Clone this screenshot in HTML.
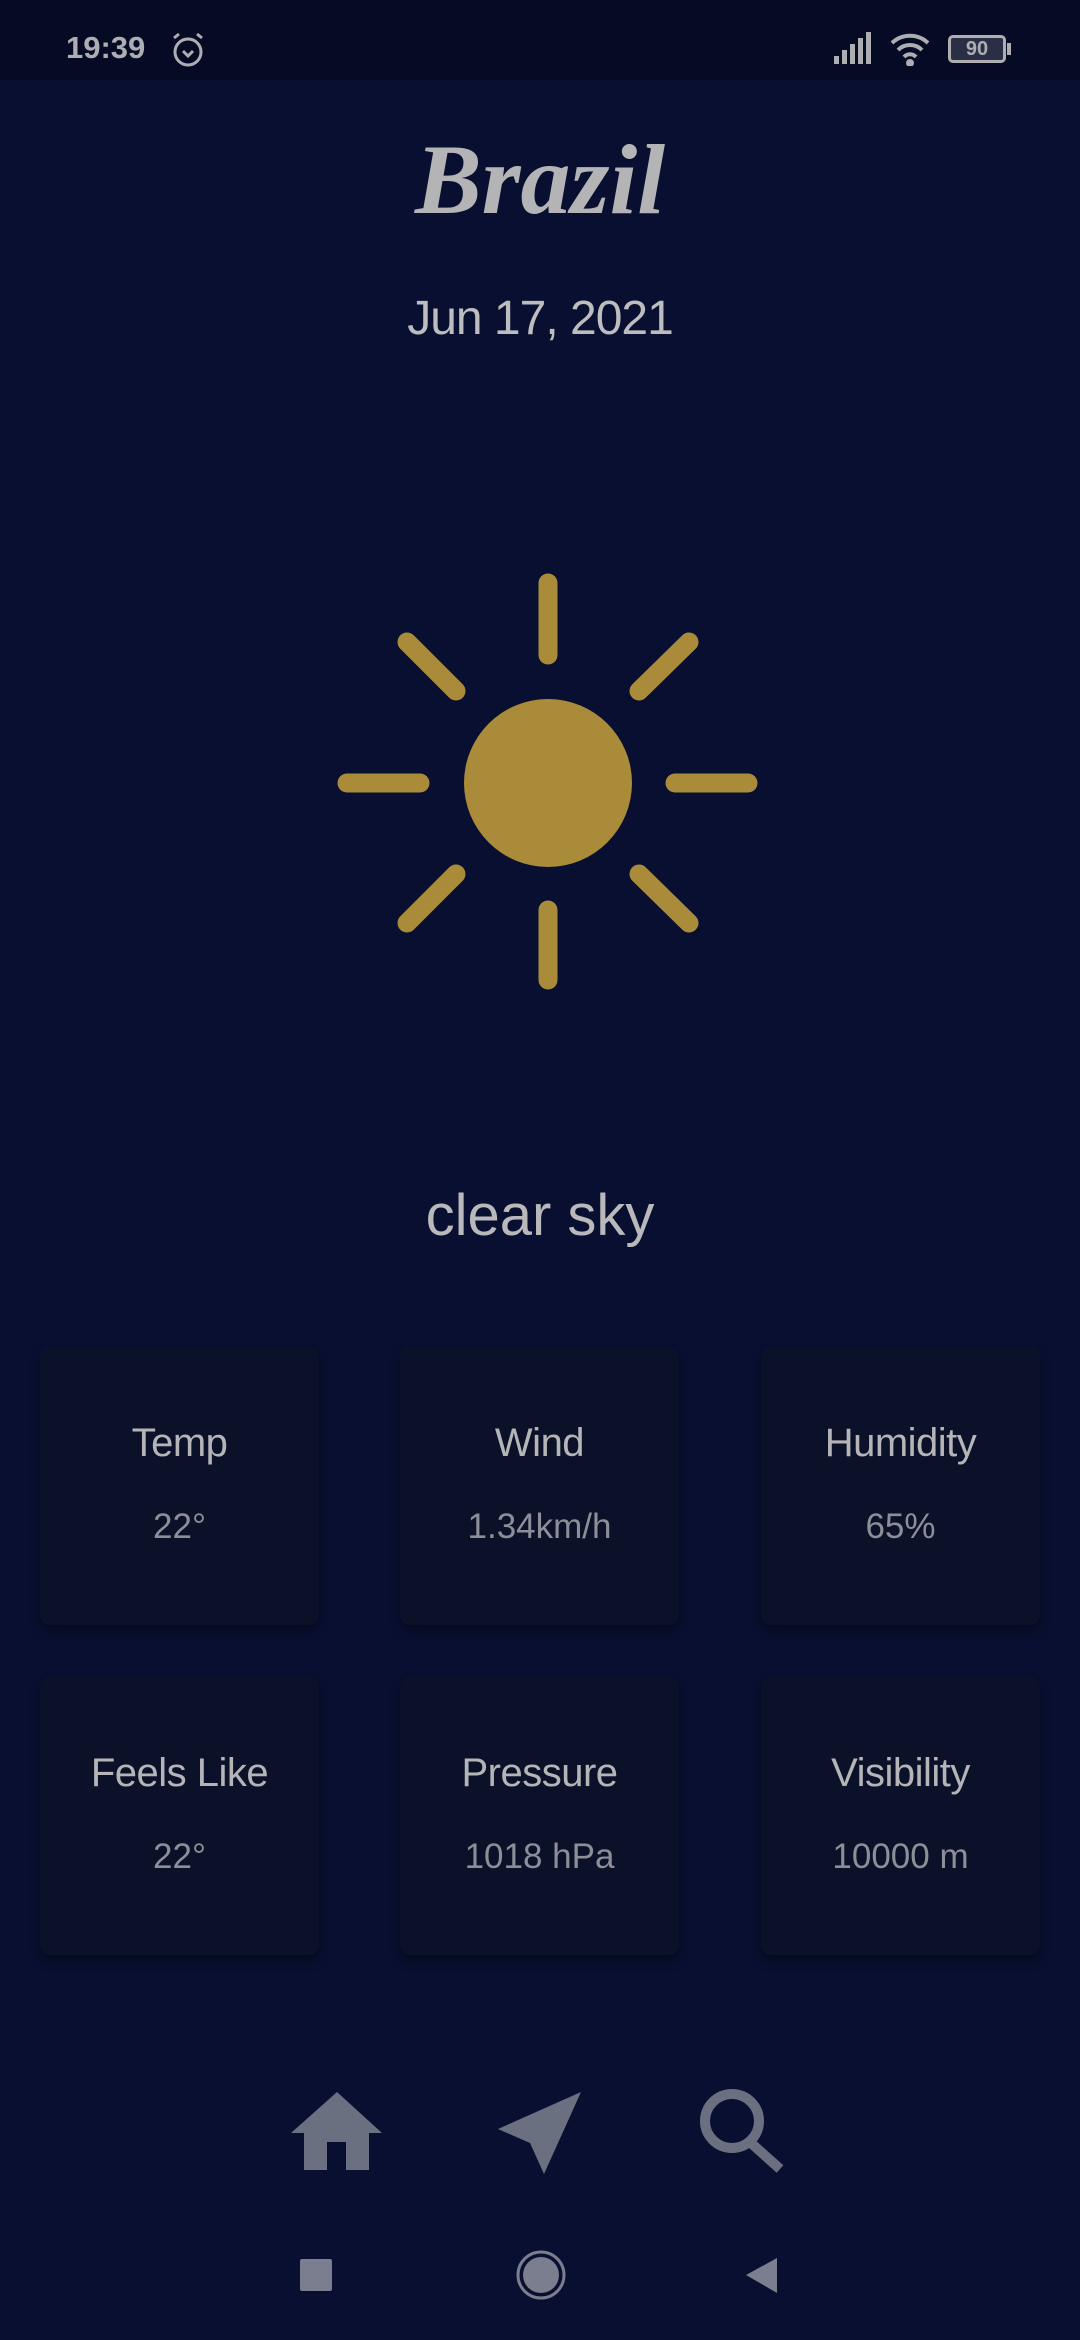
<!DOCTYPE html>
<html><head><meta charset="utf-8"><style>
*{margin:0;padding:0;box-sizing:border-box}
body{width:1080px;height:2340px;background:#080f30;position:relative;overflow:hidden;font-family:"Liberation Sans",sans-serif;color:#b8b8bc}
.sb{position:absolute;left:0;top:0;width:1080px;height:80px;background:#050b25}
.t{position:absolute;text-align:center;width:1080px;left:0}
.card{position:absolute;width:279px;height:278px;background:#0b1129;border-radius:10px;box-shadow:0 6px 10px rgba(0,0,0,.35)}
.card .l{position:absolute;top:74px;width:100%;text-align:center;font-size:40px;color:#b5b5b8;letter-spacing:-0.5px}
.card .v{position:absolute;top:160px;width:100%;text-align:center;font-size:35px;color:#8c8e98;font-weight:300}
</style></head><body>
<div class="sb"></div>
<div style="position:absolute;left:66px;top:30px;font-size:31px;font-weight:bold;color:#aeaeb2">19:39</div>
<svg style="position:absolute;left:168px;top:30px" width="40" height="40" viewBox="0 0 40 40" fill="none" stroke="#aeaeb2" stroke-width="3"><circle cx="20" cy="22" r="13"/><path d="M15 21l5 5 5-5M6 8l5-4M34 8l-5-4"/></svg>
<svg style="position:absolute;left:834px;top:32px" width="40" height="32" viewBox="0 0 40 32" fill="#aeaeb2"><rect x="0" y="24" width="5" height="8"/><rect x="8" y="18" width="5" height="14"/><rect x="16" y="12" width="5" height="20"/><rect x="24" y="6" width="5" height="26"/><rect x="32" y="0" width="5" height="32"/></svg>
<svg style="position:absolute;left:888px;top:32px" width="44" height="34" viewBox="0 0 44 34" fill="none" stroke="#aeaeb2" stroke-width="4"><path d="M4 11a26 26 0 0 1 36 0M10 18a17 17 0 0 1 24 0M16 25a8 8 0 0 1 12 0"/><circle cx="22" cy="31" r="2" fill="#aeaeb2"/></svg>
<div style="position:absolute;left:948px;top:35px;width:58px;height:28px;border:3px solid #aeaeb2;border-radius:5px;background:#2a2f45;color:#aeaeb2;font-size:20px;font-weight:bold;text-align:center;line-height:22px">90</div>
<div style="position:absolute;left:1007px;top:43px;width:4px;height:12px;background:#aeaeb2"></div>
<div class="t" style="top:122px;font-family:'Liberation Serif',serif;font-style:italic;font-weight:bold;font-size:100px;color:#b4b4b6">Brazil</div>
<div class="t" style="top:291px;font-size:48px;font-weight:300;color:#bdbdc0;letter-spacing:-1px">Jun 17, 2021</div>
<svg style="position:absolute;left:320px;top:560px" width="450" height="450" viewBox="0 0 450 450"><g stroke="#a98b3a" stroke-width="19" stroke-linecap="round"><line x1="228" y1="23" x2="228" y2="95"/><line x1="228" y1="350" x2="228" y2="420"/><line x1="27" y1="223" x2="100" y2="223"/><line x1="355" y1="223" x2="428" y2="223"/><line x1="87" y1="82" x2="136" y2="131"/><line x1="369" y1="82" x2="319" y2="131"/><line x1="87" y1="363" x2="136" y2="314"/><line x1="369" y1="363" x2="319" y2="314"/></g><circle cx="228" cy="223" r="84" fill="#a98b3a"/></svg>
<div class="t" style="top:1182px;font-size:58px;color:#b9b9bc;letter-spacing:0px">clear sky</div>
<div class="card" style="left:40px;top:1347px"><div class="l">Temp</div><div class="v">22°</div></div>
<div class="card" style="left:400px;top:1347px"><div class="l">Wind</div><div class="v">1.34km/h</div></div>
<div class="card" style="left:761px;top:1347px"><div class="l">Humidity</div><div class="v">65%</div></div>
<div class="card" style="left:40px;top:1677px"><div class="l">Feels Like</div><div class="v">22°</div></div>
<div class="card" style="left:400px;top:1677px"><div class="l">Pressure</div><div class="v">1018 hPa</div></div>
<div class="card" style="left:761px;top:1677px"><div class="l">Visibility</div><div class="v">10000 m</div></div>
<svg style="position:absolute;left:250px;top:2050px" width="580" height="290" viewBox="0 0 580 290"><g fill="#6b7080"><path d="M87 42L132 83H119V120H96V92H77V120H54V83H41Z"/><path d="M331 42L294 124L280 93L248 79Z"/></g><circle cx="482" cy="71" r="27" fill="none" stroke="#6b7080" stroke-width="10"/><line x1="501" y1="93" x2="530" y2="119" stroke="#6b7080" stroke-width="10"/><g fill="#7a7e8e"><rect x="50" y="209" width="32" height="32" rx="2"/><circle cx="291" cy="225" r="18"/><path d="M496 225L527 208V243Z"/></g><circle cx="291" cy="225" r="23" fill="none" stroke="#7a7e8e" stroke-width="3"/></svg>
</body></html>
